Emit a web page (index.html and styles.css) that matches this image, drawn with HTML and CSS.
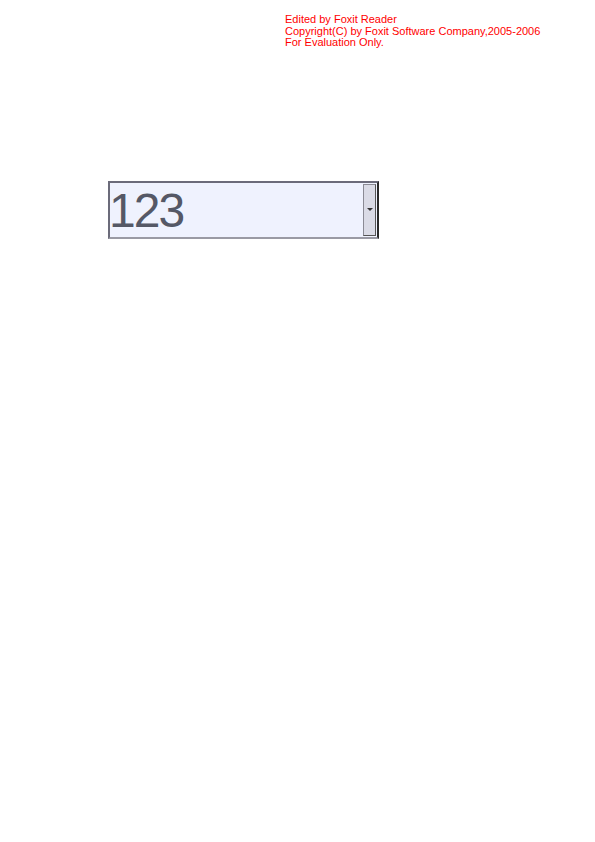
FILE: index.html
```html
<!DOCTYPE html>
<html>
<head>
<meta charset="utf-8">
<link rel="stylesheet" href="styles.css">
</head>
<body>
<div class="notice">
  <div>Edited by Foxit Reader</div>
  <div>Copyright(C) by Foxit Software Company,2005-2006</div>
  <div>For Evaluation Only.</div>
</div>
<div class="field">
  <div class="value">123</div>
  <div class="button"><span class="arrow"></span></div>
</div>
</body>
</html>
```

FILE: styles.css
```css
html, body {
  margin: 0;
  padding: 0;
  background: #ffffff;
}
body {
  width: 595px;
  height: 842px;
  font-family: "Liberation Sans", Arial, sans-serif;
}
.notice {
  padding: 14px 0 0 285px;
  color: #ff0000;
  font-size: 11px;
  line-height: 11.5px;
}
.field {
  margin: 132px 0 0 108px;
  width: 271px;
  height: 58px;
  box-sizing: border-box;
  border-top: 2px solid #6b6b7a;
  border-left: 2px solid #6b6b7a;
  border-bottom: 2px solid #9a9aa4;
  border-right: 2px solid #2a2a2a;
  background: #eff2fe;
  display: flex;
  align-items: stretch;
}
.value {
  flex: 1;
  color: #555866;
  font-size: 48px;
  line-height: 52px;
  padding-top: 2px;
  text-indent: -1px;
  letter-spacing: -2px;
}
.button {
  width: 13px;
  margin: 1px 1px 1px 0;
  box-sizing: border-box;
  border: 1px solid #8a8a94;
  border-right-color: #555;
  border-bottom-color: #555;
  background: #dadbe6;
  display: flex;
  align-items: center;
  justify-content: center;
}
.arrow {
  width: 0;
  height: 0;
  border-left: 3px solid transparent;
  border-right: 3px solid transparent;
  border-top: 3px solid #333;
}
```
